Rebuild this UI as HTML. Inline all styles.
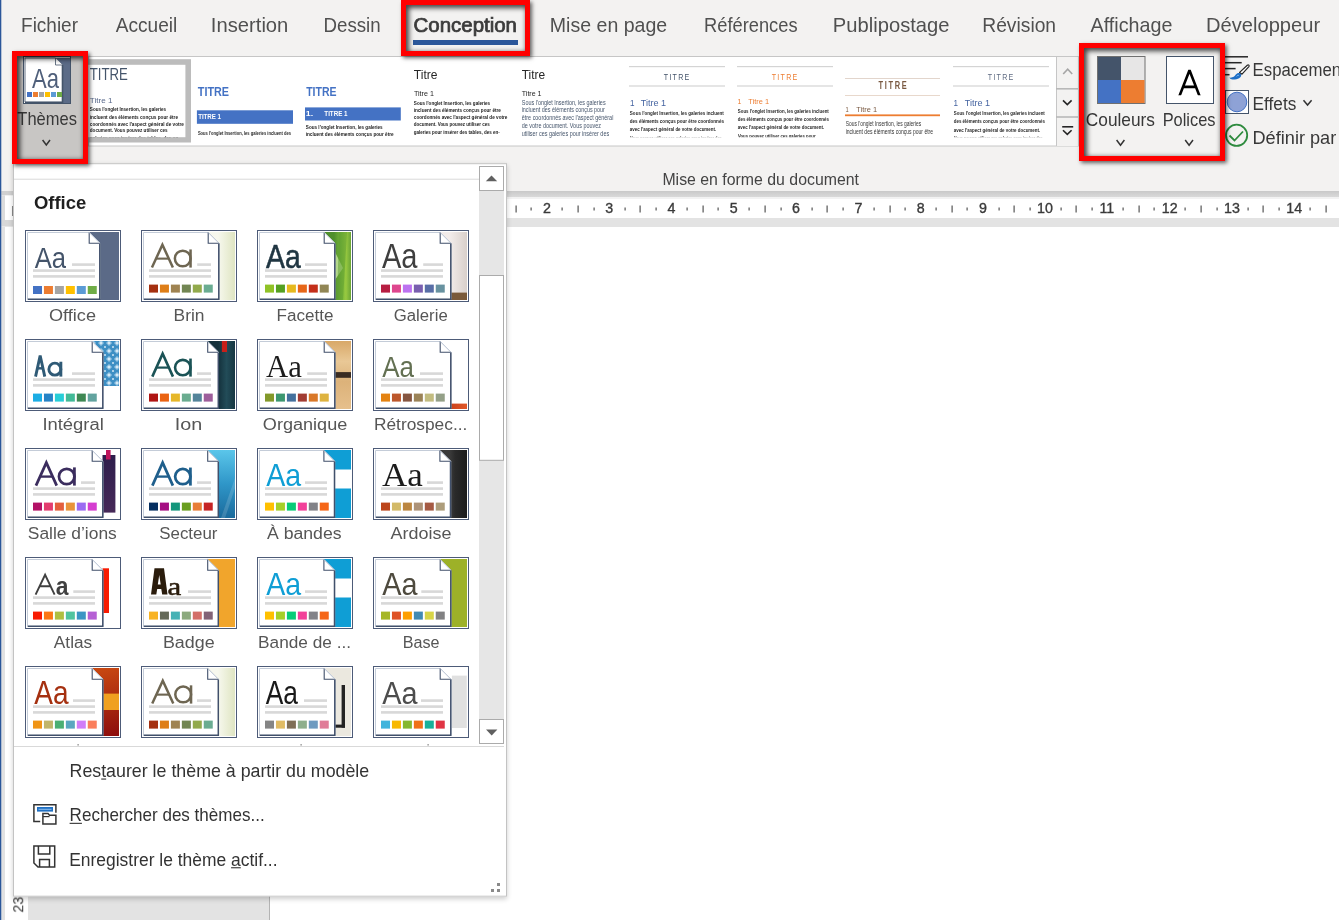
<!DOCTYPE html><html><head><meta charset="utf-8"><style>html,body{margin:0;padding:0;overflow:hidden;background:#fff}body{width:1339px;height:920px;position:relative;font-family:"Liberation Sans",sans-serif}svg{position:absolute;left:0;top:0;will-change:transform}.rb{position:absolute;box-sizing:border-box;border:5px solid #ff0000;box-shadow:2px 2px 4px 0px rgba(0,0,0,.6), inset 2px 2px 5px 1px rgba(0,0,0,.72)}</style></head><body><svg width="1339" height="920" viewBox="0 0 1339 920"><rect x="0" y="0" width="1339" height="920" fill="#ffffff" /><rect x="0" y="0" width="1339" height="191" fill="#f3f2f1" /><defs><linearGradient id="rstrip" x1="0" y1="0" x2="0" y2="1"><stop offset="0" stop-color="#c9c9c9"/><stop offset="1" stop-color="#d9d9d9"/></linearGradient><clipPath id="clg"><rect x="88" y="57" width="968" height="80.3"/></clipPath><clipPath id="cl1"><rect x="88" y="64.8" width="97.4" height="72.4"/></clipPath></defs><rect x="0" y="191" width="1339" height="6" fill="url(#rstrip)" /><rect x="0" y="197" width="1339" height="2" fill="#f2f2f2" /><rect x="0" y="199" width="1339" height="19" fill="#ffffff" /><rect x="0" y="218" width="1339" height="9" fill="#e3e3e3" /><rect x="1.3" y="227" width="3.7" height="693" fill="#e2e2e2" /><rect x="1.3" y="191" width="12" height="36" fill="#ffffff" /><rect x="1.3" y="191" width="12" height="4.3" fill="#d0d0d0" /><rect x="1.3" y="195.3" width="3.7" height="24.7" fill="#dcdcdc" /><rect x="1.3" y="220" width="12" height="6.6" fill="#d8d8d8" /><rect x="12" y="206" width="1" height="10" fill="#8a8a8a" /><rect x="28" y="227" width="241" height="693" fill="#e3e3e3" /><rect x="269" y="227" width="1" height="693" fill="#b4b4b4" /><rect x="0" y="0" width="1.3" height="920" fill="#2b579a" /><text transform="matrix(0.9265 0 0 1 21.04 31.95)" font-family='"Liberation Sans", sans-serif' font-size="20.49" font-weight="normal" fill="#505050" >Fichier</text><text transform="matrix(0.9311 0 0 1 115.76 31.95)" font-family='"Liberation Sans", sans-serif' font-size="20.49" font-weight="normal" fill="#505050" >Accueil</text><text transform="matrix(0.9870 0 0 1 210.83 31.95)" font-family='"Liberation Sans", sans-serif' font-size="20.49" font-weight="normal" fill="#505050" >Insertion</text><text transform="matrix(0.9139 0 0 1 323.46 31.95)" font-family='"Liberation Sans", sans-serif' font-size="20.49" font-weight="normal" fill="#505050" >Dessin</text><text transform="matrix(0.9555 0 0 1 549.79 31.95)" font-family='"Liberation Sans", sans-serif' font-size="20.49" font-weight="normal" fill="#505050" >Mise en page</text><text transform="matrix(0.8927 0 0 1 704.10 31.95)" font-family='"Liberation Sans", sans-serif' font-size="20.49" font-weight="normal" fill="#505050" >Références</text><text transform="matrix(0.9852 0 0 1 832.84 31.95)" font-family='"Liberation Sans", sans-serif' font-size="20.49" font-weight="normal" fill="#505050" >Publipostage</text><text transform="matrix(0.9407 0 0 1 982.22 31.95)" font-family='"Liberation Sans", sans-serif' font-size="20.49" font-weight="normal" fill="#505050" >Révision</text><text transform="matrix(0.9621 0 0 1 1090.56 31.95)" font-family='"Liberation Sans", sans-serif' font-size="20.49" font-weight="normal" fill="#505050" >Affichage</text><text transform="matrix(0.9817 0 0 1 1206.05 31.95)" font-family='"Liberation Sans", sans-serif' font-size="20.49" font-weight="normal" fill="#505050" >Développeur</text><text transform="matrix(1.0196 0 0 1 413.56 31.95)" font-family='"Liberation Sans", sans-serif' font-size="20.06" font-weight="normal" fill="#3b3b3b" stroke="#3b3b3b" stroke-width="0.75">Conception</text><rect x="413" y="40" width="105" height="5" fill="#2b579a" /><text x="542.94" y="212.8" font-family='"Liberation Sans", sans-serif' font-size="14.24" fill="#3a3a3a" stroke="#3a3a3a" stroke-width="0.35">2</text><text x="605.28" y="212.8" font-family='"Liberation Sans", sans-serif' font-size="14.24" fill="#3a3a3a" stroke="#3a3a3a" stroke-width="0.35">3</text><text x="667.58" y="212.8" font-family='"Liberation Sans", sans-serif' font-size="14.24" fill="#3a3a3a" stroke="#3a3a3a" stroke-width="0.35">4</text><text x="729.85" y="212.8" font-family='"Liberation Sans", sans-serif' font-size="14.24" fill="#3a3a3a" stroke="#3a3a3a" stroke-width="0.35">5</text><text x="792.09" y="212.8" font-family='"Liberation Sans", sans-serif' font-size="14.24" fill="#3a3a3a" stroke="#3a3a3a" stroke-width="0.35">6</text><text x="854.43" y="212.8" font-family='"Liberation Sans", sans-serif' font-size="14.24" fill="#3a3a3a" stroke="#3a3a3a" stroke-width="0.35">7</text><text x="916.74" y="212.8" font-family='"Liberation Sans", sans-serif' font-size="14.24" fill="#3a3a3a" stroke="#3a3a3a" stroke-width="0.35">8</text><text x="979.04" y="212.8" font-family='"Liberation Sans", sans-serif' font-size="14.24" fill="#3a3a3a" stroke="#3a3a3a" stroke-width="0.35">9</text><text x="1037.11" y="212.8" font-family='"Liberation Sans", sans-serif' font-size="14.24" fill="#3a3a3a" stroke="#3a3a3a" stroke-width="0.35">10</text><text x="1099.48" y="212.8" font-family='"Liberation Sans", sans-serif' font-size="14.24" fill="#3a3a3a" stroke="#3a3a3a" stroke-width="0.35">11</text><text x="1161.79" y="212.8" font-family='"Liberation Sans", sans-serif' font-size="14.24" fill="#3a3a3a" stroke="#3a3a3a" stroke-width="0.35">12</text><text x="1224.05" y="212.8" font-family='"Liberation Sans", sans-serif' font-size="14.24" fill="#3a3a3a" stroke="#3a3a3a" stroke-width="0.35">13</text><text x="1286.24" y="212.8" font-family='"Liberation Sans", sans-serif' font-size="14.24" fill="#3a3a3a" stroke="#3a3a3a" stroke-width="0.35">14</text><rect x="515.5" y="205.5" width="1.2" height="7" fill="#555555" /><rect x="530.5" y="207.5" width="1.2" height="3" fill="#555555" /><rect x="577.5" y="205.5" width="1.2" height="7" fill="#555555" /><rect x="561.5" y="207.5" width="1.2" height="3" fill="#555555" /><rect x="593.5" y="207.5" width="1.2" height="3" fill="#555555" /><rect x="639.5" y="205.5" width="1.2" height="7" fill="#555555" /><rect x="624.5" y="207.5" width="1.2" height="3" fill="#555555" /><rect x="655.5" y="207.5" width="1.2" height="3" fill="#555555" /><rect x="702.5" y="205.5" width="1.2" height="7" fill="#555555" /><rect x="686.5" y="207.5" width="1.2" height="3" fill="#555555" /><rect x="717.5" y="207.5" width="1.2" height="3" fill="#555555" /><rect x="764.5" y="205.5" width="1.2" height="7" fill="#555555" /><rect x="748.5" y="207.5" width="1.2" height="3" fill="#555555" /><rect x="780.5" y="207.5" width="1.2" height="3" fill="#555555" /><rect x="826.5" y="205.5" width="1.2" height="7" fill="#555555" /><rect x="811.5" y="207.5" width="1.2" height="3" fill="#555555" /><rect x="842.5" y="207.5" width="1.2" height="3" fill="#555555" /><rect x="889.5" y="205.5" width="1.2" height="7" fill="#555555" /><rect x="873.5" y="207.5" width="1.2" height="3" fill="#555555" /><rect x="904.5" y="207.5" width="1.2" height="3" fill="#555555" /><rect x="951.5" y="205.5" width="1.2" height="7" fill="#555555" /><rect x="935.5" y="207.5" width="1.2" height="3" fill="#555555" /><rect x="966.5" y="207.5" width="1.2" height="3" fill="#555555" /><rect x="1013.5" y="205.5" width="1.2" height="7" fill="#555555" /><rect x="998.5" y="207.5" width="1.2" height="3" fill="#555555" /><rect x="1029.5" y="207.5" width="1.2" height="3" fill="#555555" /><rect x="1075.5" y="205.5" width="1.2" height="7" fill="#555555" /><rect x="1060.5" y="207.5" width="1.2" height="3" fill="#555555" /><rect x="1091.5" y="207.5" width="1.2" height="3" fill="#555555" /><rect x="1138.5" y="205.5" width="1.2" height="7" fill="#555555" /><rect x="1122.5" y="207.5" width="1.2" height="3" fill="#555555" /><rect x="1153.5" y="207.5" width="1.2" height="3" fill="#555555" /><rect x="1200.5" y="205.5" width="1.2" height="7" fill="#555555" /><rect x="1184.5" y="207.5" width="1.2" height="3" fill="#555555" /><rect x="1216.5" y="207.5" width="1.2" height="3" fill="#555555" /><rect x="1262.5" y="205.5" width="1.2" height="7" fill="#555555" /><rect x="1247.5" y="207.5" width="1.2" height="3" fill="#555555" /><rect x="1278.5" y="207.5" width="1.2" height="3" fill="#555555" /><rect x="1325.5" y="205.5" width="1.2" height="7" fill="#555555" /><rect x="1309.5" y="207.5" width="1.2" height="3" fill="#555555" /><rect x="12" y="51" width="76" height="113" fill="#c8c6c4" /><rect x="23.5" y="56.5" width="47" height="47" fill="#ffffff" stroke="#44546a" stroke-width="1"/><rect x="55" y="58" width="15" height="45" fill="#5b6b87" /><path d="M25 58 H55.5 L62.5 65 V102 H25 Z" fill="#ffffff" stroke="#44546a" stroke-width="0.8"/><path d="M55.5 58 V65 H62.5" fill="#ffffff" stroke="#44546a" stroke-width="0.8"/><path d="M62.5 65 V102.5 H25" fill="none" stroke="#44546a" stroke-width="1.6"/><text transform="matrix(0.7732 0 0 1 31.96 87.80)" font-family='"Liberation Sans", sans-serif' font-size="28.49" font-weight="normal" fill="#4f5f7a" >Aa</text><rect x="27" y="92" width="5" height="5" fill="#4472c4" /><rect x="33" y="92" width="5" height="5" fill="#ed7d31" /><rect x="39" y="92" width="5" height="5" fill="#a5a5a5" /><rect x="45" y="92" width="5" height="5" fill="#ffc000" /><rect x="51" y="92" width="5" height="5" fill="#5b9bd5" /><rect x="57" y="92" width="5" height="5" fill="#70ad47" /><text transform="matrix(0.9454 0 0 1 17.33 125.40)" font-family='"Liberation Sans", sans-serif' font-size="17.44" font-weight="normal" fill="#383838" >Thèmes</text><polyline points="42.6,140 46.3,145 50,140" fill="none" stroke="#333333" stroke-width="1.5"/><rect x="88.5" y="56.5" width="990" height="89.5" fill="#ffffff" stroke="#c6c6c6" stroke-width="1"/><rect x="1056.5" y="57" width="21.5" height="89" fill="#f3f2f1" /><rect x="1056" y="56.5" width="1" height="89.5" fill="#c6c6c6" /><rect x="1056" y="88" width="22" height="1.6" fill="#b8b8b8" /><rect x="1056" y="116.2" width="22" height="1.6" fill="#b8b8b8" /><polyline points="1063.2,74 1067.7,69.2 1072.2,74" fill="none" stroke="#a6a6a6" stroke-width="1.6"/><polyline points="1063,100.4 1067.3,104.6 1071.6,100.4" fill="none" stroke="#262626" stroke-width="1.6"/><rect x="1062.2" y="126" width="11" height="1.6" fill="#262626" /><polyline points="1063,130.2 1067.3,134.4 1071.6,130.2" fill="none" stroke="#262626" stroke-width="1.6"/><rect x="84" y="59.2" width="107" height="83.3" fill="#bcbcbc" /><rect x="88" y="64.8" width="97.4" height="72.4" fill="#ffffff" /><text transform="matrix(0.7638 0 0 1 89.80 79.90)" font-family='"Liberation Sans", sans-serif' font-size="17.30" font-weight="normal" fill="#44546a" >TITRE</text><text transform="matrix(1.0572 0 0 1 89.82 102.60)" font-family='"Liberation Sans", sans-serif' font-size="7.70" font-weight="normal" fill="#5a6a8c" >Titre 1</text><g clip-path="url(#cl1)"><text transform="matrix(0.7649 0 0 1 89.87 111.10)" font-family='"Liberation Sans", sans-serif' font-size="5.96" font-weight="bold" fill="#1a1a1a" >Sous l'onglet Insertion, les galeries</text><text transform="matrix(0.7882 0 0 1 89.67 118.60)" font-family='"Liberation Sans", sans-serif' font-size="5.96" font-weight="bold" fill="#1a1a1a" >incluent des éléments conçus pour être</text><text transform="matrix(0.7841 0 0 1 89.82 125.50)" font-family='"Liberation Sans", sans-serif' font-size="5.96" font-weight="bold" fill="#1a1a1a" >coordonnés avec l'aspect général de votre</text><text transform="matrix(0.7735 0 0 1 89.81 132.40)" font-family='"Liberation Sans", sans-serif' font-size="5.96" font-weight="bold" fill="#1a1a1a" >document. Vous pouvez utiliser ces</text><text transform="matrix(0.7933 0 0 1 89.81 140.40)" font-family='"Liberation Sans", sans-serif' font-size="5.96" font-weight="bold" fill="#1a1a1a" >galeries pour insérer des tables, des en-</text></g><text transform="matrix(0.8965 0 0 1 197.78 96.40)" font-family='"Liberation Sans", sans-serif' font-size="12.06" font-weight="bold" fill="#4472c4" >TITRE</text><rect x="196.9" y="110.3" width="96.1" height="13.5" fill="#4472c4" /><text transform="matrix(0.8313 0 0 1 198.13 119.20)" font-family='"Liberation Sans", sans-serif' font-size="7.41" font-weight="bold" fill="#ffffff" >TITRE 1</text><text transform="matrix(0.7025 0 0 1 197.88 134.50)" font-family='"Liberation Sans", sans-serif' font-size="5.81" font-weight="bold" fill="#262626" >Sous l'onglet Insertion,  les galeries incluent des</text><text transform="matrix(0.8732 0 0 1 306.18 96.40)" font-family='"Liberation Sans", sans-serif' font-size="12.06" font-weight="bold" fill="#4472c4" >TITRE</text><rect x="305" y="107.4" width="95.8" height="13.1" fill="#4472c4" /><text transform="matrix(1.1912 0 0 1 305.74 115.80)" font-family='"Liberation Sans", sans-serif' font-size="7.41" font-weight="bold" fill="#ffffff" >1.</text><text transform="matrix(0.8423 0 0 1 324.33 115.80)" font-family='"Liberation Sans", sans-serif' font-size="7.41" font-weight="bold" fill="#ffffff" >TITRE 1</text><text transform="matrix(0.7710 0 0 1 305.87 128.90)" font-family='"Liberation Sans", sans-serif' font-size="5.96" font-weight="bold" fill="#1a1a1a" >Sous l'onglet Insertion, les galeries</text><text transform="matrix(0.7855 0 0 1 305.67 136.10)" font-family='"Liberation Sans", sans-serif' font-size="5.96" font-weight="bold" fill="#1a1a1a" >incluent des éléments conçus pour être</text><text transform="matrix(1.0113 0 0 1 413.83 78.75)" font-family='"Liberation Sans", sans-serif' font-size="11.92" font-weight="normal" fill="#262626" >Titre</text><text transform="matrix(0.9812 0 0 1 413.94 96.00)" font-family='"Liberation Sans", sans-serif' font-size="7.27" font-weight="normal" fill="#262626" >Titre 1</text><text transform="matrix(0.7649 0 0 1 413.87 104.70)" font-family='"Liberation Sans", sans-serif' font-size="5.96" font-weight="bold" fill="#1a1a1a" >Sous l'onglet Insertion, les galeries</text><text transform="matrix(0.7793 0 0 1 413.68 112.10)" font-family='"Liberation Sans", sans-serif' font-size="5.96" font-weight="bold" fill="#1a1a1a" >incluent des éléments conçus pour être</text><text transform="matrix(0.7799 0 0 1 413.82 119.00)" font-family='"Liberation Sans", sans-serif' font-size="5.96" font-weight="bold" fill="#1a1a1a" >coordonnés avec l'aspect général de votre</text><text transform="matrix(0.7536 0 0 1 413.82 126.40)" font-family='"Liberation Sans", sans-serif' font-size="5.96" font-weight="bold" fill="#1a1a1a" >document. Vous pouvez utiliser ces</text><text transform="matrix(0.7580 0 0 1 413.81 133.80)" font-family='"Liberation Sans", sans-serif' font-size="5.96" font-weight="bold" fill="#1a1a1a" >galeries pour insérer des tables, des en-</text><text transform="matrix(1.0026 0 0 1 521.63 78.75)" font-family='"Liberation Sans", sans-serif' font-size="11.92" font-weight="normal" fill="#262626" >Titre</text><text transform="matrix(0.9762 0 0 1 521.74 96.00)" font-family='"Liberation Sans", sans-serif' font-size="7.27" font-weight="normal" fill="#262626" >Titre 1</text><text transform="matrix(0.7802 0 0 1 521.75 104.70)" font-family='"Liberation Sans", sans-serif' font-size="6.98" font-weight="normal" fill="#44546a" >Sous l'onglet Insertion, les galeries</text><text transform="matrix(0.7768 0 0 1 521.64 112.40)" font-family='"Liberation Sans", sans-serif' font-size="6.98" font-weight="normal" fill="#44546a" >incluent des éléments conçus pour</text><text transform="matrix(0.7783 0 0 1 521.77 120.30)" font-family='"Liberation Sans", sans-serif' font-size="6.98" font-weight="normal" fill="#44546a" >être coordonnés avec l'aspect général</text><text transform="matrix(0.7794 0 0 1 521.77 128.40)" font-family='"Liberation Sans", sans-serif' font-size="6.98" font-weight="normal" fill="#44546a" >de votre document. Vous pouvez</text><text transform="matrix(0.7840 0 0 1 521.64 136.30)" font-family='"Liberation Sans", sans-serif' font-size="6.98" font-weight="normal" fill="#44546a" >utiliser ces galeries pour insérer des</text><g clip-path="url(#clg)"><text transform="matrix(0.6186 0 0 1 629.97 140.20)" font-family='"Liberation Sans", sans-serif' font-size="6.25" font-weight="bold" fill="#262626" >Vous pouvez utiliser ces galeries pour insérer des</text><text transform="matrix(0.6855 0 0 1 737.97 137.60)" font-family='"Liberation Sans", sans-serif' font-size="6.25" font-weight="bold" fill="#262626" >Vous pouvez utiliser ces galeries pour</text><text transform="matrix(0.5984 0 0 1 953.97 140.20)" font-family='"Liberation Sans", sans-serif' font-size="6.25" font-weight="bold" fill="#262626" >Vous pouvez utiliser ces galeries pour insérer des</text></g><rect x="629" y="66" width="96" height="1.2" fill="#d4d4d4" /><rect x="629" y="85.4" width="96" height="1.2" fill="#d4d4d4" /><text transform="matrix(0.72 0 0 1 663.84 80.30)" font-family='"Liberation Sans", sans-serif' font-size="9.88" font-weight="normal" fill="#44546a">T</text><text transform="matrix(0.72 0 0 1 669.41 80.30)" font-family='"Liberation Sans", sans-serif' font-size="9.88" font-weight="normal" fill="#44546a">I</text><text transform="matrix(0.72 0 0 1 672.62 80.30)" font-family='"Liberation Sans", sans-serif' font-size="9.88" font-weight="normal" fill="#44546a">T</text><text transform="matrix(0.72 0 0 1 678.19 80.30)" font-family='"Liberation Sans", sans-serif' font-size="9.88" font-weight="normal" fill="#44546a">R</text><text transform="matrix(0.72 0 0 1 684.56 80.30)" font-family='"Liberation Sans", sans-serif' font-size="9.88" font-weight="normal" fill="#44546a">E</text><text transform="matrix(0.8865 0 0 1 629.88 105.90)" font-family='"Liberation Sans", sans-serif' font-size="9.16" font-weight="normal" fill="#4463a0" >1</text><text transform="matrix(0.9882 0 0 1 640.80 105.90)" font-family='"Liberation Sans", sans-serif' font-size="9.16" font-weight="normal" fill="#4463a0" >Titre 1</text><text transform="matrix(0.7226 0 0 1 629.87 114.90)" font-family='"Liberation Sans", sans-serif' font-size="6.25" font-weight="bold" fill="#262626" >Sous l'onglet Insertion, les galeries incluent</text><text transform="matrix(0.7285 0 0 1 629.81 123.10)" font-family='"Liberation Sans", sans-serif' font-size="6.25" font-weight="bold" fill="#262626" >des éléments conçus pour être coordonnés</text><text transform="matrix(0.7084 0 0 1 629.87 130.80)" font-family='"Liberation Sans", sans-serif' font-size="6.25" font-weight="bold" fill="#262626" >avec l'aspect général de votre document.</text><rect x="737" y="66" width="96" height="1.2" fill="#d4d4d4" /><rect x="737" y="85.4" width="96" height="1.2" fill="#d4d4d4" /><text transform="matrix(0.72 0 0 1 771.64 80.30)" font-family='"Liberation Sans", sans-serif' font-size="9.88" font-weight="normal" fill="#ed7d31">T</text><text transform="matrix(0.72 0 0 1 777.26 80.30)" font-family='"Liberation Sans", sans-serif' font-size="9.88" font-weight="normal" fill="#ed7d31">I</text><text transform="matrix(0.72 0 0 1 780.52 80.30)" font-family='"Liberation Sans", sans-serif' font-size="9.88" font-weight="normal" fill="#ed7d31">T</text><text transform="matrix(0.72 0 0 1 786.14 80.30)" font-family='"Liberation Sans", sans-serif' font-size="9.88" font-weight="normal" fill="#ed7d31">R</text><text transform="matrix(0.72 0 0 1 792.56 80.30)" font-family='"Liberation Sans", sans-serif' font-size="9.88" font-weight="normal" fill="#ed7d31">E</text><text transform="matrix(0.8865 0 0 1 737.47 103.90)" font-family='"Liberation Sans", sans-serif' font-size="7.85" font-weight="normal" fill="#ed7d31" >1</text><text transform="matrix(0.9454 0 0 1 748.33 103.90)" font-family='"Liberation Sans", sans-serif' font-size="7.85" font-weight="normal" fill="#ed7d31" >Titre 1</text><text transform="matrix(0.6996 0 0 1 737.87 113.30)" font-family='"Liberation Sans", sans-serif' font-size="6.25" font-weight="bold" fill="#262626" >Sous l'onglet Insertion, les galeries incluent</text><text transform="matrix(0.7052 0 0 1 737.82 121.00)" font-family='"Liberation Sans", sans-serif' font-size="6.25" font-weight="bold" fill="#262626" >des éléments conçus pour être coordonnés</text><text transform="matrix(0.7084 0 0 1 737.87 128.50)" font-family='"Liberation Sans", sans-serif' font-size="6.25" font-weight="bold" fill="#262626" >avec l'aspect général de votre document.</text><rect x="845" y="78" width="95" height="1" fill="#e2d5cc" /><rect x="845" y="95" width="95" height="1" fill="#e8d8cc" /><text transform="matrix(0.72 0 0 1 878.52 89.10)" font-family='"Liberation Sans", sans-serif' font-size="10.32" font-weight="bold" fill="#7a5a42">T</text><text transform="matrix(0.72 0 0 1 884.76 89.10)" font-family='"Liberation Sans", sans-serif' font-size="10.32" font-weight="bold" fill="#7a5a42">I</text><text transform="matrix(0.72 0 0 1 888.52 89.10)" font-family='"Liberation Sans", sans-serif' font-size="10.32" font-weight="bold" fill="#7a5a42">T</text><text transform="matrix(0.72 0 0 1 894.77 89.10)" font-family='"Liberation Sans", sans-serif' font-size="10.32" font-weight="bold" fill="#7a5a42">R</text><text transform="matrix(0.72 0 0 1 901.83 89.10)" font-family='"Liberation Sans", sans-serif' font-size="10.32" font-weight="bold" fill="#7a5a42">E</text><text transform="matrix(0.8141 0 0 1 845.56 111.90)" font-family='"Liberation Sans", sans-serif' font-size="7.12" font-weight="normal" fill="#7a5a42" >1</text><text transform="matrix(1.0419 0 0 1 856.33 111.90)" font-family='"Liberation Sans", sans-serif' font-size="7.12" font-weight="normal" fill="#7a5a42" >Titre 1</text><rect x="845" y="114.4" width="95" height="1.8" fill="#ed7d31" /><text transform="matrix(0.7312 0 0 1 845.78 126.40)" font-family='"Liberation Sans", sans-serif' font-size="6.69" font-weight="normal" fill="#333333" >Sous l'onglet Insertion, les galeries</text><text transform="matrix(0.7527 0 0 1 845.66 133.50)" font-family='"Liberation Sans", sans-serif' font-size="6.69" font-weight="normal" fill="#333333" >incluent des éléments conçus pour être</text><rect x="953" y="66" width="96" height="1.2" fill="#d4d4d4" /><rect x="953" y="85.4" width="96" height="1.2" fill="#d4d4d4" /><text transform="matrix(0.72 0 0 1 987.84 80.30)" font-family='"Liberation Sans", sans-serif' font-size="9.88" font-weight="normal" fill="#5f6b82">T</text><text transform="matrix(0.72 0 0 1 993.41 80.30)" font-family='"Liberation Sans", sans-serif' font-size="9.88" font-weight="normal" fill="#5f6b82">I</text><text transform="matrix(0.72 0 0 1 996.62 80.30)" font-family='"Liberation Sans", sans-serif' font-size="9.88" font-weight="normal" fill="#5f6b82">T</text><text transform="matrix(0.72 0 0 1 1002.19 80.30)" font-family='"Liberation Sans", sans-serif' font-size="9.88" font-weight="normal" fill="#5f6b82">R</text><text transform="matrix(0.72 0 0 1 1008.56 80.30)" font-family='"Liberation Sans", sans-serif' font-size="9.88" font-weight="normal" fill="#5f6b82">E</text><text transform="matrix(0.8865 0 0 1 953.38 105.90)" font-family='"Liberation Sans", sans-serif' font-size="9.16" font-weight="normal" fill="#4463a0" >1</text><text transform="matrix(0.9882 0 0 1 964.80 105.90)" font-family='"Liberation Sans", sans-serif' font-size="9.16" font-weight="normal" fill="#4463a0" >Titre 1</text><text transform="matrix(0.6996 0 0 1 953.87 115.40)" font-family='"Liberation Sans", sans-serif' font-size="6.25" font-weight="bold" fill="#262626" >Sous l'onglet Insertion, les galeries incluent</text><text transform="matrix(0.7052 0 0 1 953.82 123.40)" font-family='"Liberation Sans", sans-serif' font-size="6.25" font-weight="bold" fill="#262626" >des éléments conçus pour être coordonnés</text><text transform="matrix(0.7084 0 0 1 953.87 131.50)" font-family='"Liberation Sans", sans-serif' font-size="6.25" font-weight="bold" fill="#262626" >avec l'aspect général de votre document.</text><rect x="1097.5" y="56.5" width="47.5" height="47" fill="#e7e6e6" stroke="#707070" stroke-width="1"/><rect x="1098" y="57" width="23" height="23" fill="#44546a" /><rect x="1098" y="80" width="23" height="23" fill="#4472c4" /><rect x="1121" y="80" width="23.5" height="23" fill="#ed7d31" /><rect x="1166.5" y="56.5" width="47" height="47" fill="#ffffff" stroke="#44546a" stroke-width="1"/><clipPath id="clA"><rect x="1170" y="60" width="40" height="35.3"/></clipPath><path clip-path="url(#clA)" d="M1178.9 97.5 L1189.5 70.3 L1200.1 97.5 M1183 86.9 H1196" fill="none" stroke="#000" stroke-width="2.6" stroke-linejoin="bevel"/><text transform="matrix(0.9914 0 0 1 1085.82 125.50)" font-family='"Liberation Sans", sans-serif' font-size="17.44" font-weight="normal" fill="#383838" >Couleurs</text><text transform="matrix(0.9397 0 0 1 1162.66 125.50)" font-family='"Liberation Sans", sans-serif' font-size="17.44" font-weight="normal" fill="#383838" >Polices</text><polyline points="1116.6,140 1120.5,145.2 1124.4,140" fill="none" stroke="#333333" stroke-width="1.5"/><polyline points="1185.2,140 1189.1,145.2 1193,140" fill="none" stroke="#333333" stroke-width="1.5"/><rect x="1225" y="56.05" width="23" height="1.5" fill="#262626" /><rect x="1225" y="61.95" width="16.700000000000045" height="1.5" fill="#262626" /><rect x="1225" y="67.85" width="10.599999999999909" height="1.5" fill="#262626" /><rect x="1225" y="73.95" width="4.5" height="1.5" fill="#262626" /><path d="M1247.3 65.2 C1248.6 64.4 1249.6 65.4 1248.9 66.6 L1242 74.2 L1239.6 72.4 Z" fill="#ffffff" stroke="#262626" stroke-width="1.2" stroke-linejoin="round"/><path d="M1229.4 77.6 C1232.8 78 1234.6 76.4 1235.8 74.6 C1237.2 72.6 1240.4 72.4 1241.2 74.8 C1241.6 77.6 1237.6 79.8 1232.6 79.6 C1231 79.5 1230 78.7 1229.4 77.6 Z" fill="#1e6fc6"/><path d="M1236.6 76.4 C1237.4 75.2 1238.6 75 1239 75.8" fill="none" stroke="#8ec3f0" stroke-width="0.9"/><text transform="matrix(0.9303 0 0 1 1252.62 75.60)" font-family='"Liberation Sans", sans-serif' font-size="18.02" font-weight="normal" fill="#383838" >Espacement</text><rect x="1225.5" y="90.5" width="23" height="23" fill="#ffffff" stroke="#44546a" stroke-width="1"/><circle cx="1237" cy="102" r="9.8" fill="#8ea2d6" stroke="#4472c4" stroke-width="1"/><text transform="matrix(0.9556 0 0 1 1252.59 110.00)" font-family='"Liberation Sans", sans-serif' font-size="18.02" font-weight="normal" fill="#383838" >Effets</text><polyline points="1303.5,100.3 1307.55,105 1311.6,100.3" fill="none" stroke="#333333" stroke-width="1.5"/><circle cx="1236.6" cy="135.3" r="10.6" fill="none" stroke="#2e8b3e" stroke-width="1.8"/><polyline points="1229.5,135.5 1234.5,140.5 1243,131.5" fill="none" stroke="#2e8b3e" stroke-width="1.8"/><text transform="matrix(1.0079 0 0 1 1252.51 143.70)" font-family='"Liberation Sans", sans-serif' font-size="18.02" font-weight="normal" fill="#383838" >Définir par</text><text transform="matrix(1.0017 0 0 1 662.40 184.80)" font-family='"Liberation Sans", sans-serif' font-size="15.84" font-weight="normal" fill="#444444" >Mise en forme du document</text></svg><div style="position:absolute;left:13px;top:163px;width:494px;height:734px;box-shadow:0px 2px 5px rgba(0,0,0,.2)"></div><svg width="1339" height="920" viewBox="0 0 1339 920"><defs>
<linearGradient id="g_brin" gradientUnits="userSpaceOnUse" x1="77" y1="0" x2="94" y2="0"><stop offset="0" stop-color="#f7f8ee"/><stop offset="1" stop-color="#dfe5c2"/></linearGradient>
<linearGradient id="g_fac" gradientUnits="userSpaceOnUse" x1="77" y1="0" x2="94" y2="0"><stop offset="0" stop-color="#4f8f2c"/><stop offset="0.45" stop-color="#7ab83a"/><stop offset="0.7" stop-color="#98c940"/><stop offset="1" stop-color="#6aa536"/></linearGradient>
<linearGradient id="g_gal" gradientUnits="userSpaceOnUse" x1="77" y1="0" x2="94" y2="0"><stop offset="0" stop-color="#f2ecea"/><stop offset="1" stop-color="#d9d0cb"/></linearGradient>
<linearGradient id="g_ion" gradientUnits="userSpaceOnUse" x1="77" y1="0" x2="94" y2="0"><stop offset="0" stop-color="#13303b"/><stop offset="0.5" stop-color="#224c58"/><stop offset="1" stop-color="#163642"/></linearGradient>
<linearGradient id="g_org" gradientUnits="userSpaceOnUse" x1="0" y1="2" x2="0" y2="70"><stop offset="0" stop-color="#d8a868"/><stop offset="0.3" stop-color="#e9c896"/><stop offset="0.6" stop-color="#dcb27a"/><stop offset="1" stop-color="#e6c08c"/></linearGradient>
<linearGradient id="g_sal" gradientUnits="userSpaceOnUse" x1="77" y1="2" x2="94" y2="70"><stop offset="0" stop-color="#2a1c4a"/><stop offset="1" stop-color="#4a2a5a"/></linearGradient>
<linearGradient id="g_sec" gradientUnits="userSpaceOnUse" x1="0" y1="2" x2="0" y2="70"><stop offset="0" stop-color="#5bc6ea"/><stop offset="0.5" stop-color="#2f96c8"/><stop offset="1" stop-color="#1a6a9c"/></linearGradient>
<linearGradient id="g_ard" gradientUnits="userSpaceOnUse" x1="77" y1="0" x2="94" y2="0"><stop offset="0" stop-color="#3a3a3a"/><stop offset="0.3" stop-color="#2a2a2a"/><stop offset="1" stop-color="#1c1c1c"/></linearGradient>
<linearGradient id="g_ber" gradientUnits="userSpaceOnUse" x1="77" y1="2" x2="94" y2="70"><stop offset="0" stop-color="#c84812"/><stop offset="1" stop-color="#8c0c0c"/></linearGradient>
<linearGradient id="g_ret" gradientUnits="userSpaceOnUse" x1="77" y1="0" x2="94" y2="0"><stop offset="0" stop-color="#c9401a"/><stop offset="1" stop-color="#e0582a"/></linearGradient>
<pattern id="p_int" x="0" y="0" width="8" height="8" patternUnits="userSpaceOnUse"><rect width="8" height="8" fill="#3d8fc4"/><path d="M4 1 L7 4 L4 7 L1 4 Z" fill="#9cc8e4"/><circle cx="4" cy="4" r="1" fill="#e8f4fb"/><circle cx="0" cy="0" r="1" fill="#d0e6f4"/><circle cx="8" cy="0" r="1" fill="#d0e6f4"/><circle cx="0" cy="8" r="1" fill="#d0e6f4"/><circle cx="8" cy="8" r="1" fill="#d0e6f4"/></pattern>
<clipPath id="gridclip"><rect x="14" y="180" width="465" height="566"/></clipPath>
</defs><rect x="13.5" y="163.7" width="493" height="732.5" fill="#ffffff" stroke="#c3c3c3" stroke-width="1"/><rect x="14" y="178.7" width="465" height="1" fill="#d9d9d9" /><text transform="matrix(1.0014 0 0 1 33.94 209.00)" font-family='"Liberation Sans", sans-serif' font-size="18.46" font-weight="bold" fill="#1f1f1f" >Office</text><rect x="479" y="191" width="25" height="528" fill="#e6e6e6" /><rect x="479.5" y="166.5" width="24" height="24" fill="#ffffff" stroke="#ababab" stroke-width="1"/><path d="M485.8 181.2 L497.2 181.2 L491.5 175.6 Z" fill="#606060"/><rect x="479.5" y="275.5" width="24" height="184.8" fill="#ffffff" stroke="#ababab" stroke-width="1"/><rect x="479.5" y="719.5" width="24" height="24" fill="#ffffff" stroke="#ababab" stroke-width="1"/><path d="M486 729.6 L497.4 729.6 L491.7 735.4 Z" fill="#606060"/><rect x="14" y="746" width="490" height="1" fill="#d9d9d9" /><rect x="77.5" y="744" width="1.2" height="1.6" fill="#8a8a8a" /><rect x="300.5" y="744" width="1.2" height="1.6" fill="#8a8a8a" /><rect x="427.5" y="744" width="1.2" height="1.6" fill="#8a8a8a" /><g clip-path="url(#gridclip)"><rect x="25.5" y="230.5" width="95" height="71" fill="#fff" stroke="#4d5b78" stroke-width="1"/><g transform="translate(25 230)"><rect x="62" y="2" width="32" height="68" fill="#5b6a87"/><path d="M2.5 2.5 H64.2 L75 13.3 V69.4 H2.5 Z" fill="#fff" stroke="#c4ccd8" stroke-width="1"/><path d="M74.8 13.3 V69.2 H2.8" fill="none" stroke="#41506b" stroke-width="1.5"/><path d="M64.2 2.5 V13.3 H75" fill="#fff" stroke="#41506b" stroke-width="1.1"/><path d="M64.2 2.5 L75 13.3" fill="none" stroke="#b7c1d1" stroke-width="0.9"/><rect x="47" y="33.3" width="23" height="2.6" fill="#d8d8d8" /><rect x="8" y="39.3" width="62" height="2.6" fill="#d8d8d8" /><rect x="8" y="45.1" width="62" height="2.6" fill="#d8d8d8" /><rect x="8.0" y="56" width="9" height="8" fill="#4472c4" /><rect x="18.95" y="56" width="9" height="8" fill="#ed7d31" /><rect x="29.9" y="56" width="9" height="8" fill="#a5a5a5" /><rect x="40.85" y="56" width="9" height="8" fill="#ffc000" /><rect x="51.8" y="56" width="9" height="8" fill="#5b9bd5" /><rect x="62.75" y="56" width="9" height="8" fill="#70ad47" /></g><text transform="matrix(0.8560 0 0 1 34.65 267.60)" font-family='"Liberation Sans", sans-serif' font-size="29.94" font-weight="normal" fill="#44546a" >Aa</text><text transform="matrix(1.0484 0 0 1 48.94 321.40)" font-family='"Liberation Sans", sans-serif' font-size="17.30" font-weight="normal" fill="#565656" >Office</text><rect x="141.5" y="230.5" width="95" height="71" fill="#fff" stroke="#4d5b78" stroke-width="1"/><g transform="translate(141 230)"><rect x="64" y="2" width="30" height="68" fill="url(#g_brin)"/><path d="M2.5 2.5 H67.2 L78 13.3 V69.4 H2.5 Z" fill="#fff" stroke="#c4ccd8" stroke-width="1"/><path d="M77.8 13.3 V69.2 H2.8" fill="none" stroke="#41506b" stroke-width="1.5"/><path d="M67.2 2.5 V13.3 H78" fill="#fff" stroke="#41506b" stroke-width="1.1"/><path d="M67.2 2.5 L78 13.3" fill="none" stroke="#b7c1d1" stroke-width="0.9"/><rect x="56.2" y="33.3" width="13.799999999999997" height="2.6" fill="#d8d8d8" /><rect x="8" y="39.3" width="62" height="2.6" fill="#d8d8d8" /><rect x="8" y="45.1" width="62" height="2.6" fill="#d8d8d8" /><rect x="8.0" y="54.6" width="9" height="8" fill="#a53010" /><rect x="18.95" y="54.6" width="9" height="8" fill="#de7e18" /><rect x="29.9" y="54.6" width="9" height="8" fill="#9f8351" /><rect x="40.85" y="54.6" width="9" height="8" fill="#728653" /><rect x="51.8" y="54.6" width="9" height="8" fill="#92aa4c" /><rect x="62.75" y="54.6" width="9" height="8" fill="#6aac91" /></g><g transform="translate(141 230)" fill="none" stroke="#6e6652" stroke-width="2.5"><path d="M10.95 37.6 L21.41 14.80 L31.88 37.6"/><path d="M14.93 28.63 H27.90" stroke-width="2.12"/><circle cx="41.71" cy="28.51" r="7.84"/><path d="M49.55 19.43 V37.6"/></g><text transform="matrix(1.0065 0 0 1 173.57 321.40)" font-family='"Liberation Sans", sans-serif' font-size="17.30" font-weight="normal" fill="#565656" >Brin</text><rect x="257.5" y="230.5" width="95" height="71" fill="#fff" stroke="#4d5b78" stroke-width="1"/><g transform="translate(257 230)"><rect x="64" y="2" width="30" height="68" fill="url(#g_fac)"/><path d="M78 22 L86 38 L78 50 Z" fill="#c8e6a0" opacity="0.8"/><path d="M82 2 L90 2 L86 70 L80 70 Z" fill="#5a9a30" opacity="0.5"/><path d="M2.5 2.5 H67.2 L78 13.3 V69.4 H2.5 Z" fill="#fff" stroke="#c4ccd8" stroke-width="1"/><path d="M77.8 13.3 V69.2 H2.8" fill="none" stroke="#41506b" stroke-width="1.5"/><path d="M67.2 2.5 V13.3 H78" fill="#fff" stroke="#41506b" stroke-width="1.1"/><path d="M67.2 2.5 L78 13.3" fill="none" stroke="#b7c1d1" stroke-width="0.9"/><rect x="48" y="33.3" width="22" height="2.6" fill="#d8d8d8" /><rect x="8" y="39.3" width="62" height="2.6" fill="#d8d8d8" /><rect x="8" y="45.1" width="62" height="2.6" fill="#d8d8d8" /><rect x="8.0" y="54.6" width="9" height="8" fill="#90c226" /><rect x="18.95" y="54.6" width="9" height="8" fill="#54a021" /><rect x="29.9" y="54.6" width="9" height="8" fill="#e6b91e" /><rect x="40.85" y="54.6" width="9" height="8" fill="#e76618" /><rect x="51.8" y="54.6" width="9" height="8" fill="#c42f1a" /><rect x="62.75" y="54.6" width="9" height="8" fill="#918655" /></g><text transform="matrix(0.8330 0 0 1 266.04 267.60)" font-family='"Liberation Sans", sans-serif' font-size="34.01" font-weight="normal" fill="#203642" stroke="#203642" stroke-width="0.55">Aa</text><text transform="matrix(0.9874 0 0 1 276.60 321.40)" font-family='"Liberation Sans", sans-serif' font-size="17.30" font-weight="normal" fill="#565656" >Facette</text><rect x="373.5" y="230.5" width="95" height="71" fill="#fff" stroke="#4d5b78" stroke-width="1"/><g transform="translate(373 230)"><rect x="64" y="2" width="30" height="68" fill="url(#g_gal)"/><rect x="77" y="62.6" width="17" height="7.4" fill="#7a5a3a"/><path d="M2.5 2.5 H67.2 L78 13.3 V69.4 H2.5 Z" fill="#fff" stroke="#c4ccd8" stroke-width="1"/><path d="M77.8 13.3 V69.2 H2.8" fill="none" stroke="#41506b" stroke-width="1.5"/><path d="M67.2 2.5 V13.3 H78" fill="#fff" stroke="#41506b" stroke-width="1.1"/><path d="M67.2 2.5 L78 13.3" fill="none" stroke="#b7c1d1" stroke-width="0.9"/><rect x="50.2" y="33.3" width="19.799999999999997" height="2.6" fill="#d8d8d8" /><rect x="8" y="39.3" width="62" height="2.6" fill="#d8d8d8" /><rect x="8" y="45.1" width="62" height="2.6" fill="#d8d8d8" /><rect x="8.0" y="54.6" width="9" height="8" fill="#b71e42" /><rect x="18.95" y="54.6" width="9" height="8" fill="#de478e" /><rect x="29.9" y="54.6" width="9" height="8" fill="#bc72f0" /><rect x="40.85" y="54.6" width="9" height="8" fill="#795faf" /><rect x="51.8" y="54.6" width="9" height="8" fill="#586ea6" /><rect x="62.75" y="54.6" width="9" height="8" fill="#6892a0" /></g><text transform="matrix(0.8439 0 0 1 381.94 267.60)" font-family='"Liberation Sans", sans-serif' font-size="34.45" font-weight="normal" fill="#3f3f3f" >Aa</text><text transform="matrix(0.9682 0 0 1 393.76 321.40)" font-family='"Liberation Sans", sans-serif' font-size="17.30" font-weight="normal" fill="#565656" >Galerie</text><rect x="25.5" y="339.5" width="95" height="71" fill="#fff" stroke="#4d5b78" stroke-width="1"/><g transform="translate(25 339)"><rect x="64" y="2" width="30" height="45" fill="url(#p_int)"/><path d="M2.5 2.5 H67.2 L78 13.3 V69.4 H2.5 Z" fill="#fff" stroke="#c4ccd8" stroke-width="1"/><path d="M77.8 13.3 V69.2 H2.8" fill="none" stroke="#41506b" stroke-width="1.5"/><path d="M67.2 2.5 V13.3 H78" fill="#fff" stroke="#41506b" stroke-width="1.1"/><path d="M67.2 2.5 L78 13.3" fill="none" stroke="#b7c1d1" stroke-width="0.9"/><rect x="47" y="33.3" width="23" height="2.6" fill="#d8d8d8" /><rect x="8" y="39.3" width="62" height="2.6" fill="#d8d8d8" /><rect x="8" y="45.1" width="62" height="2.6" fill="#d8d8d8" /><rect x="8.0" y="54.6" width="9" height="8" fill="#1cade4" /><rect x="18.95" y="54.6" width="9" height="8" fill="#2683c6" /><rect x="29.9" y="54.6" width="9" height="8" fill="#27ced7" /><rect x="40.85" y="54.6" width="9" height="8" fill="#42ba97" /><rect x="51.8" y="54.6" width="9" height="8" fill="#3e8853" /><rect x="62.75" y="54.6" width="9" height="8" fill="#62a39f" /></g><g transform="translate(25 339)" fill="none" stroke="#2f5a76" stroke-width="2.9"><path d="M10.55 37.6 L15.16 16.60 L19.78 37.6"/><path d="M12.30 29.32 H18.02" stroke-width="2.46"/><circle cx="29.86" cy="30.16" r="5.99"/><path d="M35.85 22.73 V37.6"/></g><text transform="matrix(1.0648 0 0 1 42.40 430.40)" font-family='"Liberation Sans", sans-serif' font-size="17.30" font-weight="normal" fill="#565656" >Intégral</text><rect x="141.5" y="339.5" width="95" height="71" fill="#fff" stroke="#4d5b78" stroke-width="1"/><g transform="translate(141 339)"><rect x="64" y="2" width="30" height="68" fill="url(#g_ion)"/><rect x="80.9" y="2" width="5.1" height="11" fill="#c8201a"/><path d="M2.5 2.5 H66.7 L77.5 13.3 V69.4 H2.5 Z" fill="#fff" stroke="#c4ccd8" stroke-width="1"/><path d="M77.3 13.3 V69.2 H2.8" fill="none" stroke="#41506b" stroke-width="1.5"/><path d="M66.7 2.5 V13.3 H77.5" fill="#fff" stroke="#41506b" stroke-width="1.1"/><path d="M66.7 2.5 L77.5 13.3" fill="none" stroke="#b7c1d1" stroke-width="0.9"/><rect x="56" y="33.3" width="14" height="2.6" fill="#d8d8d8" /><rect x="8" y="39.3" width="62" height="2.6" fill="#d8d8d8" /><rect x="8" y="45.1" width="62" height="2.6" fill="#d8d8d8" /><rect x="8.0" y="54.6" width="9" height="8" fill="#b01513" /><rect x="18.95" y="54.6" width="9" height="8" fill="#ea6312" /><rect x="29.9" y="54.6" width="9" height="8" fill="#e6b729" /><rect x="40.85" y="54.6" width="9" height="8" fill="#6aac90" /><rect x="51.8" y="54.6" width="9" height="8" fill="#54849a" /><rect x="62.75" y="54.6" width="9" height="8" fill="#9e5e9b" /></g><g transform="translate(141 339)" fill="none" stroke="#1b5356" stroke-width="2.6"><path d="M11.30 37.6 L21.63 14.70 L31.96 37.6"/><path d="M15.22 28.59 H28.03" stroke-width="2.21"/><circle cx="41.78" cy="28.58" r="7.72"/><path d="M49.50 19.56 V37.6"/></g><text transform="matrix(1.1442 0 0 1 174.77 430.40)" font-family='"Liberation Sans", sans-serif' font-size="17.30" font-weight="normal" fill="#565656" >Ion</text><rect x="257.5" y="339.5" width="95" height="71" fill="#fff" stroke="#4d5b78" stroke-width="1"/><g transform="translate(257 339)"><rect x="64" y="2" width="30" height="68" fill="url(#g_org)"/><rect x="77" y="33.1" width="17" height="5.7" fill="#3a2c22"/><path d="M2.5 2.5 H67.2 L78 13.3 V69.4 H2.5 Z" fill="#fff" stroke="#c4ccd8" stroke-width="1"/><path d="M77.8 13.3 V69.2 H2.8" fill="none" stroke="#41506b" stroke-width="1.5"/><path d="M67.2 2.5 V13.3 H78" fill="#fff" stroke="#41506b" stroke-width="1.1"/><path d="M67.2 2.5 L78 13.3" fill="none" stroke="#b7c1d1" stroke-width="0.9"/><rect x="50.2" y="33.3" width="19.799999999999997" height="2.6" fill="#d8d8d8" /><rect x="8" y="39.3" width="62" height="2.6" fill="#d8d8d8" /><rect x="8" y="45.1" width="62" height="2.6" fill="#d8d8d8" /><rect x="8.0" y="54.6" width="9" height="8" fill="#83992a" /><rect x="18.95" y="54.6" width="9" height="8" fill="#3c9770" /><rect x="29.9" y="54.6" width="9" height="8" fill="#44709d" /><rect x="40.85" y="54.6" width="9" height="8" fill="#a23c33" /><rect x="51.8" y="54.6" width="9" height="8" fill="#d97828" /><rect x="62.75" y="54.6" width="9" height="8" fill="#deb340" /></g><text transform="matrix(0.9792 0 0 1 266.00 376.60)" font-family='"Liberation Serif", serif' font-size="31.46" font-weight="normal" fill="#1c1c1c" >Aa</text><text transform="matrix(1.0456 0 0 1 262.84 430.40)" font-family='"Liberation Sans", sans-serif' font-size="17.30" font-weight="normal" fill="#565656" >Organique</text><rect x="373.5" y="339.5" width="95" height="71" fill="#fff" stroke="#4d5b78" stroke-width="1"/><g transform="translate(373 339)"><rect x="77" y="64.6" width="17" height="5.4" fill="url(#g_ret)"/><path d="M2.5 2.5 H67.2 L78 13.3 V69.4 H2.5 Z" fill="#fff" stroke="#c4ccd8" stroke-width="1"/><path d="M77.8 13.3 V69.2 H2.8" fill="none" stroke="#41506b" stroke-width="1.5"/><path d="M67.2 2.5 V13.3 H78" fill="#fff" stroke="#41506b" stroke-width="1.1"/><path d="M67.2 2.5 L78 13.3" fill="none" stroke="#b7c1d1" stroke-width="0.9"/><rect x="47" y="33.3" width="23" height="2.6" fill="#d8d8d8" /><rect x="8" y="39.3" width="62" height="2.6" fill="#d8d8d8" /><rect x="8" y="45.1" width="62" height="2.6" fill="#d8d8d8" /><rect x="8.0" y="54.6" width="9" height="8" fill="#e48312" /><rect x="18.95" y="54.6" width="9" height="8" fill="#bd582c" /><rect x="29.9" y="54.6" width="9" height="8" fill="#865640" /><rect x="40.85" y="54.6" width="9" height="8" fill="#9b8357" /><rect x="51.8" y="54.6" width="9" height="8" fill="#c2bc80" /><rect x="62.75" y="54.6" width="9" height="8" fill="#94a088" /></g><text transform="matrix(0.8798 0 0 1 382.25 376.60)" font-family='"Liberation Sans", sans-serif' font-size="29.51" font-weight="normal" fill="#637052" >Aa</text><text transform="matrix(1.0017 0 0 1 373.98 430.40)" font-family='"Liberation Sans", sans-serif' font-size="17.30" font-weight="normal" fill="#565656" >Rétrospec...</text><rect x="25.5" y="448.5" width="95" height="71" fill="#fff" stroke="#4d5b78" stroke-width="1"/><g transform="translate(25 448)"><rect x="77.5" y="7" width="12.9" height="57.6" fill="url(#g_sal)"/><rect x="81" y="2" width="4.6" height="9.5" fill="#c0145c"/><path d="M2.5 2.5 H67.2 L78 13.3 V69.4 H2.5 Z" fill="#fff" stroke="#c4ccd8" stroke-width="1"/><path d="M77.8 13.3 V69.2 H2.8" fill="none" stroke="#41506b" stroke-width="1.5"/><path d="M67.2 2.5 V13.3 H78" fill="#fff" stroke="#41506b" stroke-width="1.1"/><path d="M67.2 2.5 L78 13.3" fill="none" stroke="#b7c1d1" stroke-width="0.9"/><rect x="56" y="33.3" width="14" height="2.6" fill="#d8d8d8" /><rect x="8" y="39.3" width="62" height="2.6" fill="#d8d8d8" /><rect x="8" y="45.1" width="62" height="2.6" fill="#d8d8d8" /><rect x="8.0" y="54.6" width="9" height="8" fill="#b31166" /><rect x="18.95" y="54.6" width="9" height="8" fill="#e33d6f" /><rect x="29.9" y="54.6" width="9" height="8" fill="#e45f3c" /><rect x="40.85" y="54.6" width="9" height="8" fill="#e9943a" /><rect x="51.8" y="54.6" width="9" height="8" fill="#9b6bf2" /><rect x="62.75" y="54.6" width="9" height="8" fill="#d53dd0" /></g><g transform="translate(25 448)" fill="none" stroke="#3b2d5e" stroke-width="2.75"><path d="M10.97 37.6 L21.34 14.70 L31.71 37.6"/><path d="M14.91 28.59 H27.77" stroke-width="2.34"/><circle cx="41.69" cy="28.49" r="7.73"/><path d="M49.42 19.38 V37.6"/></g><text transform="matrix(1.0063 0 0 1 27.81 539.40)" font-family='"Liberation Sans", sans-serif' font-size="17.30" font-weight="normal" fill="#565656" >Salle d’ions</text><rect x="141.5" y="448.5" width="95" height="71" fill="#fff" stroke="#4d5b78" stroke-width="1"/><g transform="translate(141 448)"><rect x="64" y="2" width="30" height="68" fill="url(#g_sec)"/><path d="M80 70 L94 30 L94 40 L84 70 Z" fill="#ffffff" opacity="0.15"/><path d="M2.5 2.5 H66.7 L77.5 13.3 V69.4 H2.5 Z" fill="#fff" stroke="#c4ccd8" stroke-width="1"/><path d="M77.3 13.3 V69.2 H2.8" fill="none" stroke="#41506b" stroke-width="1.5"/><path d="M66.7 2.5 V13.3 H77.5" fill="#fff" stroke="#41506b" stroke-width="1.1"/><path d="M66.7 2.5 L77.5 13.3" fill="none" stroke="#b7c1d1" stroke-width="0.9"/><rect x="56" y="33.3" width="14" height="2.6" fill="#d8d8d8" /><rect x="8" y="39.3" width="62" height="2.6" fill="#d8d8d8" /><rect x="8" y="45.1" width="62" height="2.6" fill="#d8d8d8" /><rect x="8.0" y="54.6" width="9" height="8" fill="#052f61" /><rect x="18.95" y="54.6" width="9" height="8" fill="#a50e82" /><rect x="29.9" y="54.6" width="9" height="8" fill="#14967c" /><rect x="40.85" y="54.6" width="9" height="8" fill="#6a9e1f" /><rect x="51.8" y="54.6" width="9" height="8" fill="#e87d37" /><rect x="62.75" y="54.6" width="9" height="8" fill="#c62324" /></g><g transform="translate(141 448)" fill="none" stroke="#1f5f8c" stroke-width="2.75"><path d="M11.38 37.6 L21.63 14.70 L31.88 37.6"/><path d="M15.27 28.59 H27.98" stroke-width="2.34"/><circle cx="41.78" cy="28.58" r="7.65"/><path d="M49.42 19.56 V37.6"/></g><text transform="matrix(0.9772 0 0 1 159.23 539.40)" font-family='"Liberation Sans", sans-serif' font-size="17.30" font-weight="normal" fill="#565656" >Secteur</text><rect x="257.5" y="448.5" width="95" height="71" fill="#fff" stroke="#4d5b78" stroke-width="1"/><g transform="translate(257 448)"><rect x="64" y="2" width="30" height="19.5" fill="#0f9ed5"/><rect x="77" y="40.5" width="17" height="29.5" fill="#0f9ed5"/><path d="M2.5 2.5 H66.9 L77.7 13.3 V69.4 H2.5 Z" fill="#fff" stroke="#c4ccd8" stroke-width="1"/><path d="M77.5 13.3 V69.2 H2.8" fill="none" stroke="#41506b" stroke-width="1.5"/><path d="M66.9 2.5 V13.3 H77.7" fill="#fff" stroke="#41506b" stroke-width="1.1"/><path d="M66.9 2.5 L77.7 13.3" fill="none" stroke="#b7c1d1" stroke-width="0.9"/><rect x="48" y="33.3" width="22" height="2.6" fill="#d8d8d8" /><rect x="8" y="39.3" width="62" height="2.6" fill="#d8d8d8" /><rect x="8" y="45.1" width="62" height="2.6" fill="#d8d8d8" /><rect x="8.0" y="54.6" width="9" height="8" fill="#ffc000" /><rect x="18.95" y="54.6" width="9" height="8" fill="#a5d028" /><rect x="29.9" y="54.6" width="9" height="8" fill="#08cc78" /><rect x="40.85" y="54.6" width="9" height="8" fill="#f24099" /><rect x="51.8" y="54.6" width="9" height="8" fill="#828288" /><rect x="62.75" y="54.6" width="9" height="8" fill="#f56617" /></g><text transform="matrix(0.9103 0 0 1 266.24 485.60)" font-family='"Liberation Sans", sans-serif' font-size="31.40" font-weight="normal" fill="#0f9ed5" >Aa</text><text transform="matrix(1.0217 0 0 1 266.97 539.40)" font-family='"Liberation Sans", sans-serif' font-size="17.30" font-weight="normal" fill="#565656" >À bandes</text><rect x="373.5" y="448.5" width="95" height="71" fill="#fff" stroke="#4d5b78" stroke-width="1"/><g transform="translate(373 448)"><rect x="64" y="2" width="30" height="68" fill="url(#g_ard)"/><path d="M2.5 2.5 H66.9 L77.7 13.3 V69.4 H2.5 Z" fill="#fff" stroke="#c4ccd8" stroke-width="1"/><path d="M77.5 13.3 V69.2 H2.8" fill="none" stroke="#41506b" stroke-width="1.5"/><path d="M66.9 2.5 V13.3 H77.7" fill="#fff" stroke="#41506b" stroke-width="1.1"/><path d="M66.9 2.5 L77.7 13.3" fill="none" stroke="#b7c1d1" stroke-width="0.9"/><rect x="54" y="33.3" width="16" height="2.6" fill="#d8d8d8" /><rect x="8" y="39.3" width="62" height="2.6" fill="#d8d8d8" /><rect x="8" y="45.1" width="62" height="2.6" fill="#d8d8d8" /><rect x="8.0" y="54.6" width="9" height="8" fill="#bc451b" /><rect x="18.95" y="54.6" width="9" height="8" fill="#d3ba68" /><rect x="29.9" y="54.6" width="9" height="8" fill="#bb8640" /><rect x="40.85" y="54.6" width="9" height="8" fill="#ad9277" /><rect x="51.8" y="54.6" width="9" height="8" fill="#a55a43" /><rect x="62.75" y="54.6" width="9" height="8" fill="#ad9d7b" /></g><text transform="matrix(1.0279 0 0 1 381.96 485.60)" font-family='"Liberation Serif", serif' font-size="34.06" font-weight="normal" fill="#1c1c1c" >Aa</text><text transform="matrix(1.0373 0 0 1 390.56 539.40)" font-family='"Liberation Sans", sans-serif' font-size="17.30" font-weight="normal" fill="#565656" >Ardoise</text><rect x="25.5" y="557.5" width="95" height="71" fill="#fff" stroke="#4d5b78" stroke-width="1"/><g transform="translate(25 557)"><rect x="77.5" y="11.3" width="6.5" height="44.7" fill="#f81b02"/><path d="M2.5 2.5 H67.2 L78 13.3 V69.4 H2.5 Z" fill="#fff" stroke="#c4ccd8" stroke-width="1"/><path d="M77.8 13.3 V69.2 H2.8" fill="none" stroke="#41506b" stroke-width="1.5"/><path d="M67.2 2.5 V13.3 H78" fill="#fff" stroke="#41506b" stroke-width="1.1"/><path d="M67.2 2.5 L78 13.3" fill="none" stroke="#b7c1d1" stroke-width="0.9"/><rect x="48.3" y="33.3" width="21.700000000000003" height="2.6" fill="#d8d8d8" /><rect x="8" y="39.3" width="62" height="2.6" fill="#d8d8d8" /><rect x="8" y="45.1" width="62" height="2.6" fill="#d8d8d8" /><rect x="8.0" y="54.6" width="9" height="8" fill="#f81b02" /><rect x="18.95" y="54.6" width="9" height="8" fill="#fc7715" /><rect x="29.9" y="54.6" width="9" height="8" fill="#afbf41" /><rect x="40.85" y="54.6" width="9" height="8" fill="#50c49f" /><rect x="51.8" y="54.6" width="9" height="8" fill="#3b95c4" /><rect x="62.75" y="54.6" width="9" height="8" fill="#b560d4" /></g><g transform="translate(25 557)" fill="none" stroke="#404040" stroke-width="1.9"><path d="M10.6 37.6 L20.1 17.8 L29.6 37.6 M14.2 29.3 H26.0"/></g><text transform="matrix(0.8602 0 0 1 55.73 594.60)" font-family='"Liberation Sans", sans-serif' font-size="26.60" font-weight="bold" fill="#404040" >a</text><text transform="matrix(0.9975 0 0 1 53.87 648.40)" font-family='"Liberation Sans", sans-serif' font-size="17.30" font-weight="normal" fill="#565656" >Atlas</text><rect x="141.5" y="557.5" width="95" height="71" fill="#fff" stroke="#4d5b78" stroke-width="1"/><g transform="translate(141 557)"><rect x="64" y="2" width="30" height="68" fill="#f1a52c"/><path d="M2.5 2.5 H66.7 L77.5 13.3 V69.4 H2.5 Z" fill="#fff" stroke="#c4ccd8" stroke-width="1"/><path d="M77.3 13.3 V69.2 H2.8" fill="none" stroke="#41506b" stroke-width="1.5"/><path d="M66.7 2.5 V13.3 H77.5" fill="#fff" stroke="#41506b" stroke-width="1.1"/><path d="M66.7 2.5 L77.5 13.3" fill="none" stroke="#b7c1d1" stroke-width="0.9"/><rect x="47" y="33.3" width="23" height="2.6" fill="#d8d8d8" /><rect x="8" y="39.3" width="62" height="2.6" fill="#d8d8d8" /><rect x="8" y="45.1" width="62" height="2.6" fill="#d8d8d8" /><rect x="8.0" y="54.6" width="9" height="8" fill="#f8b323" /><rect x="18.95" y="54.6" width="9" height="8" fill="#656a59" /><rect x="29.9" y="54.6" width="9" height="8" fill="#46b2b5" /><rect x="40.85" y="54.6" width="9" height="8" fill="#8caa7e" /><rect x="51.8" y="54.6" width="9" height="8" fill="#d36f68" /><rect x="62.75" y="54.6" width="9" height="8" fill="#826276" /></g><g transform="translate(141 557)"><path d="M10 37.6 L13.5 11.3 H23 L26.5 37.6 H21.2 L20.3 32 H16.2 L15.3 37.6 Z M16.8 27.5 H19.7 L18.25 18 Z" fill="#2a1c0c"/></g><text transform="matrix(1.1896 0 0 1 167.41 594.60)" font-family='"Liberation Serif", serif' font-size="25.96" font-weight="normal" fill="#2a1c0c" stroke="#2a1c0c" stroke-width="0.5">a</text><text transform="matrix(1.0350 0 0 1 162.93 648.40)" font-family='"Liberation Sans", sans-serif' font-size="17.30" font-weight="normal" fill="#565656" >Badge</text><rect x="257.5" y="557.5" width="95" height="71" fill="#fff" stroke="#4d5b78" stroke-width="1"/><g transform="translate(257 557)"><rect x="64" y="2" width="30" height="19.5" fill="#0f9ed5"/><rect x="77" y="40.5" width="17" height="29.5" fill="#0f9ed5"/><path d="M2.5 2.5 H66.9 L77.7 13.3 V69.4 H2.5 Z" fill="#fff" stroke="#c4ccd8" stroke-width="1"/><path d="M77.5 13.3 V69.2 H2.8" fill="none" stroke="#41506b" stroke-width="1.5"/><path d="M66.9 2.5 V13.3 H77.7" fill="#fff" stroke="#41506b" stroke-width="1.1"/><path d="M66.9 2.5 L77.7 13.3" fill="none" stroke="#b7c1d1" stroke-width="0.9"/><rect x="48" y="33.3" width="22" height="2.6" fill="#d8d8d8" /><rect x="8" y="39.3" width="62" height="2.6" fill="#d8d8d8" /><rect x="8" y="45.1" width="62" height="2.6" fill="#d8d8d8" /><rect x="8.0" y="54.6" width="9" height="8" fill="#ffc000" /><rect x="18.95" y="54.6" width="9" height="8" fill="#a5d028" /><rect x="29.9" y="54.6" width="9" height="8" fill="#08cc78" /><rect x="40.85" y="54.6" width="9" height="8" fill="#f24099" /><rect x="51.8" y="54.6" width="9" height="8" fill="#828288" /><rect x="62.75" y="54.6" width="9" height="8" fill="#f56617" /></g><text transform="matrix(0.9103 0 0 1 266.24 594.60)" font-family='"Liberation Sans", sans-serif' font-size="31.40" font-weight="normal" fill="#0f9ed5" >Aa</text><text transform="matrix(0.9968 0 0 1 258.09 648.40)" font-family='"Liberation Sans", sans-serif' font-size="17.30" font-weight="normal" fill="#565656" >Bande de ...</text><rect x="373.5" y="557.5" width="95" height="71" fill="#fff" stroke="#4d5b78" stroke-width="1"/><g transform="translate(373 557)"><rect x="64" y="2" width="30" height="68" fill="#9db128"/><path d="M2.5 2.5 H67.2 L78 13.3 V69.4 H2.5 Z" fill="#fff" stroke="#c4ccd8" stroke-width="1"/><path d="M77.8 13.3 V69.2 H2.8" fill="none" stroke="#41506b" stroke-width="1.5"/><path d="M67.2 2.5 V13.3 H78" fill="#fff" stroke="#41506b" stroke-width="1.1"/><path d="M67.2 2.5 L78 13.3" fill="none" stroke="#b7c1d1" stroke-width="0.9"/><rect x="48.3" y="33.3" width="21.700000000000003" height="2.6" fill="#d8d8d8" /><rect x="8" y="39.3" width="62" height="2.6" fill="#d8d8d8" /><rect x="8" y="45.1" width="62" height="2.6" fill="#d8d8d8" /><rect x="8.0" y="54.6" width="9" height="8" fill="#a6b727" /><rect x="18.95" y="54.6" width="9" height="8" fill="#df5327" /><rect x="29.9" y="54.6" width="9" height="8" fill="#fe9e00" /><rect x="40.85" y="54.6" width="9" height="8" fill="#418ab3" /><rect x="51.8" y="54.6" width="9" height="8" fill="#d7d447" /><rect x="62.75" y="54.6" width="9" height="8" fill="#818183" /></g><text transform="matrix(0.9181 0 0 1 382.24 594.60)" font-family='"Liberation Sans", sans-serif' font-size="31.40" font-weight="normal" fill="#4e4a3e" >Aa</text><text transform="matrix(0.9346 0 0 1 402.67 648.40)" font-family='"Liberation Sans", sans-serif' font-size="17.30" font-weight="normal" fill="#565656" >Base</text><rect x="25.5" y="666.5" width="95" height="71" fill="#fff" stroke="#4d5b78" stroke-width="1"/><g transform="translate(25 666)"><rect x="64" y="2" width="30" height="68" fill="url(#g_ber)"/><rect x="77" y="27.6" width="17" height="16.4" fill="#f0a020"/><path d="M2.5 2.5 H67.2 L78 13.3 V69.4 H2.5 Z" fill="#fff" stroke="#c4ccd8" stroke-width="1"/><path d="M77.8 13.3 V69.2 H2.8" fill="none" stroke="#41506b" stroke-width="1.5"/><path d="M67.2 2.5 V13.3 H78" fill="#fff" stroke="#41506b" stroke-width="1.1"/><path d="M67.2 2.5 L78 13.3" fill="none" stroke="#b7c1d1" stroke-width="0.9"/><rect x="48" y="33.3" width="22" height="2.6" fill="#d8d8d8" /><rect x="8" y="39.3" width="62" height="2.6" fill="#d8d8d8" /><rect x="8" y="45.1" width="62" height="2.6" fill="#d8d8d8" /><rect x="8.0" y="54.6" width="9" height="8" fill="#f09415" /><rect x="18.95" y="54.6" width="9" height="8" fill="#c1b56b" /><rect x="29.9" y="54.6" width="9" height="8" fill="#4baf73" /><rect x="40.85" y="54.6" width="9" height="8" fill="#5aa6c0" /><rect x="51.8" y="54.6" width="9" height="8" fill="#d17df9" /><rect x="62.75" y="54.6" width="9" height="8" fill="#fa7e5c" /></g><text transform="matrix(0.8258 0 0 1 34.25 703.60)" font-family='"Liberation Sans", sans-serif' font-size="34.01" font-weight="normal" fill="#a53010" >Aa</text><rect x="141.5" y="666.5" width="95" height="71" fill="#fff" stroke="#4d5b78" stroke-width="1"/><g transform="translate(141 666)"><rect x="64" y="2" width="30" height="68" fill="url(#g_brin)"/><path d="M2.5 2.5 H66.7 L77.5 13.3 V69.4 H2.5 Z" fill="#fff" stroke="#c4ccd8" stroke-width="1"/><path d="M77.3 13.3 V69.2 H2.8" fill="none" stroke="#41506b" stroke-width="1.5"/><path d="M66.7 2.5 V13.3 H77.5" fill="#fff" stroke="#41506b" stroke-width="1.1"/><path d="M66.7 2.5 L77.5 13.3" fill="none" stroke="#b7c1d1" stroke-width="0.9"/><rect x="56" y="33.3" width="14" height="2.6" fill="#d8d8d8" /><rect x="8" y="39.3" width="62" height="2.6" fill="#d8d8d8" /><rect x="8" y="45.1" width="62" height="2.6" fill="#d8d8d8" /><rect x="8.0" y="54.6" width="9" height="8" fill="#a53010" /><rect x="18.95" y="54.6" width="9" height="8" fill="#de7e18" /><rect x="29.9" y="54.6" width="9" height="8" fill="#9f8351" /><rect x="40.85" y="54.6" width="9" height="8" fill="#728653" /><rect x="51.8" y="54.6" width="9" height="8" fill="#92aa4c" /><rect x="62.75" y="54.6" width="9" height="8" fill="#6aac91" /></g><g transform="translate(141 666)" fill="none" stroke="#6e6652" stroke-width="2.5"><path d="M11.25 37.6 L21.77 14.80 L32.29 37.6"/><path d="M15.25 28.63 H28.29" stroke-width="2.12"/><circle cx="42.17" cy="28.47" r="7.88"/><path d="M50.05 19.34 V37.6"/></g><rect x="257.5" y="666.5" width="95" height="71" fill="#fff" stroke="#4d5b78" stroke-width="1"/><g transform="translate(257 666)"><rect x="64" y="2" width="30" height="68" fill="#ebe8df"/><rect x="84.6" y="19" width="3.4" height="42.7" fill="#222"/><rect x="77" y="58.6" width="11" height="3.1" fill="#222"/><path d="M2.5 2.5 H67.2 L78 13.3 V69.4 H2.5 Z" fill="#fff" stroke="#c4ccd8" stroke-width="1"/><path d="M77.8 13.3 V69.2 H2.8" fill="none" stroke="#41506b" stroke-width="1.5"/><path d="M67.2 2.5 V13.3 H78" fill="#fff" stroke="#41506b" stroke-width="1.1"/><path d="M67.2 2.5 L78 13.3" fill="none" stroke="#b7c1d1" stroke-width="0.9"/><rect x="47" y="33.3" width="23" height="2.6" fill="#d8d8d8" /><rect x="8" y="39.3" width="62" height="2.6" fill="#d8d8d8" /><rect x="8" y="45.1" width="62" height="2.6" fill="#d8d8d8" /><rect x="8.0" y="54.6" width="9" height="8" fill="#858585" /><rect x="18.95" y="54.6" width="9" height="8" fill="#e0bb64" /><rect x="29.9" y="54.6" width="9" height="8" fill="#7f6e56" /><rect x="40.85" y="54.6" width="9" height="8" fill="#8eae8c" /><rect x="51.8" y="54.6" width="9" height="8" fill="#6e9ac0" /><rect x="62.75" y="54.6" width="9" height="8" fill="#e07c98" /></g><text transform="matrix(0.8135 0 0 1 265.75 703.60)" font-family='"Liberation Sans", sans-serif' font-size="32.41" font-weight="normal" fill="#1a1a1a" >Aa</text><rect x="373.5" y="666.5" width="95" height="71" fill="#fff" stroke="#4d5b78" stroke-width="1"/><g transform="translate(373 666)"><rect x="78.9" y="9.6" width="14.9" height="52.4" fill="#e0e0e0"/><path d="M2.5 2.5 H67.2 L78 13.3 V69.4 H2.5 Z" fill="#fff" stroke="#c4ccd8" stroke-width="1"/><path d="M77.8 13.3 V69.2 H2.8" fill="none" stroke="#41506b" stroke-width="1.5"/><path d="M67.2 2.5 V13.3 H78" fill="#fff" stroke="#41506b" stroke-width="1.1"/><path d="M67.2 2.5 L78 13.3" fill="none" stroke="#b7c1d1" stroke-width="0.9"/><rect x="48" y="33.3" width="22" height="2.6" fill="#d8d8d8" /><rect x="8" y="39.3" width="62" height="2.6" fill="#d8d8d8" /><rect x="8" y="45.1" width="62" height="2.6" fill="#d8d8d8" /><rect x="8.0" y="54.6" width="9" height="8" fill="#40b4dc" /><rect x="18.95" y="54.6" width="9" height="8" fill="#f8b800" /><rect x="29.9" y="54.6" width="9" height="8" fill="#84b830" /><rect x="40.85" y="54.6" width="9" height="8" fill="#f07018" /><rect x="51.8" y="54.6" width="9" height="8" fill="#18b09a" /><rect x="62.75" y="54.6" width="9" height="8" fill="#e03444" /></g><text transform="matrix(0.9398 0 0 1 382.24 703.60)" font-family='"Liberation Sans", sans-serif' font-size="30.67" font-weight="normal" fill="#4d4d4d" >Aa</text></g><text transform="matrix(1.0211 0 0 1 69.54 776.90)" font-family='"Liberation Sans", sans-serif' font-size="17.44" font-weight="normal" fill="#333333" >Restaurer le thème à partir du modèle</text><rect x="101.21" y="778.5" width="4.95" height="1.1" fill="#333333" /><text transform="matrix(0.9777 0 0 1 69.60 821.20)" font-family='"Liberation Sans", sans-serif' font-size="17.44" font-weight="normal" fill="#333333" >Rechercher des thèmes...</text><rect x="69.6" y="822.8000000000001" width="12.32" height="1.1" fill="#333333" /><text transform="matrix(1.0000 0 0 1 69.17 865.60)" font-family='"Liberation Sans", sans-serif' font-size="17.44" font-weight="normal" fill="#333333" >Enregistrer le thème actif...</text><rect x="231.07" y="867.2" width="9.7" height="1.1" fill="#333333" /><path d="M40.2 821.6 H33.9 V804.7 H55.9 V812.7" fill="none" stroke="#333" stroke-width="1.5"/><rect x="37" y="807" width="16" height="4.6" fill="#1f6fc2" /><rect x="38.5" y="808.8" width="13" height="1" fill="#8fc0f0" /><path d="M42.9 823.9 V813.6 H48 L49.5 815.3 H55.9 V823.9 Z" fill="#fff" stroke="#333" stroke-width="1.5"/><line x1="42.9" y1="816.6" x2="49.5" y2="816.6" stroke="#333" stroke-width="1.2"/><path d="M33.9 845.9 H54.7 V867.1 H38 L33.9 863 Z" fill="none" stroke="#333" stroke-width="1.5"/><path d="M38.4 845.9 V854.1 H49.8 V845.9" fill="none" stroke="#333" stroke-width="1.5"/><path d="M39.6 867.1 V859.4 H49.4 V867.1" fill="none" stroke="#333" stroke-width="1.5"/><rect x="497" y="883" width="3" height="3" fill="#8a8a8a" /><rect x="491" y="889" width="3" height="3" fill="#8a8a8a" /><rect x="497" y="889" width="3" height="3" fill="#8a8a8a" /><text transform="translate(23.2 912.6) rotate(-90)" font-family='"Liberation Sans", sans-serif' font-size="14.2" fill="#333">23</text></svg><div class="rb" style="left:401px;top:0px;width:128.5px;height:55.5px"></div><div class="rb" style="left:12px;top:51px;width:76px;height:113px"></div><div class="rb" style="left:1079px;top:43px;width:146px;height:118px"></div></body></html>
